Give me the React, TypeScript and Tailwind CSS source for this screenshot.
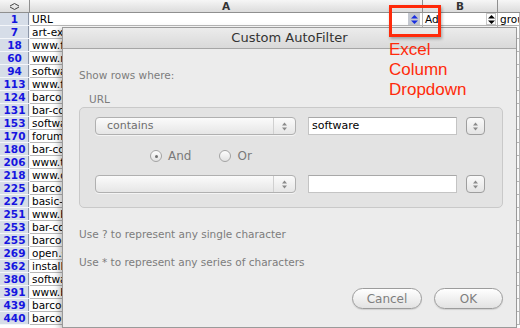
import React from "react";

const rows: [string, string][] = [
  ["7", "art-explosion.com"],
  ["18", "www.freedownloadscenter.com"],
  ["60", "www.raxsoft.com"],
  ["94", "software.informer.com"],
  ["113", "www.freewarefiles.com"],
  ["124", "barcode-software.net"],
  ["131", "bar-code-labels.com"],
  ["153", "software.net"],
  ["170", "forums.barcode.com"],
  ["180", "bar-code.info"],
  ["206", "www.tucows.com"],
  ["218", "www.download.com"],
  ["225", "barcodesinc.com"],
  ["227", "basic-ideas.com"],
  ["251", "www.barcodeman.com"],
  ["253", "bar-code-fonts.com"],
  ["255", "barcode-label.com"],
  ["269", "open.source.net"],
  ["362", "install.com"],
  ["380", "software.com"],
  ["391", "www.brothersoft.com"],
  ["439", "barcode-gen.com"],
  ["440", "barcodes.net"],
];

const cell = "h-[13px] border-r border-b border-[#b8b8b8] bg-white overflow-hidden whitespace-nowrap leading-[12px] pl-[2px] text-[10.5px] text-black";
const rowHead = "h-[13px] border-r border-b border-[#f4f6fa] bg-[#d6dde8] text-center font-bold text-[10.5px] leading-[12px] text-[#1515e0] shadow-[inset_-1px_0_0_#8c96a8]";

const Updown = ({ color = "#000" }: { color?: string }) => (
  <svg width="7" height="9" viewBox="0 0 7 9">
    <polygon points="3.5,0 7,3.5 0,3.5" fill={color} />
    <polygon points="3.5,9 7,5.5 0,5.5" fill={color} />
  </svg>
);

const TinyArrows = () => (
  <svg width="5" height="9" viewBox="0 0 5 9">
    <polygon points="2.5,0.5 5,3.5 0,3.5" fill="#8a8a8a" />
    <polygon points="2.5,8.5 5,5.5 0,5.5" fill="#8a8a8a" />
  </svg>
);

const Popup = ({ label }: { label?: string }) => (
  <div className="flex h-[18px] w-[201px] items-center rounded-[4px] border border-[#b0b0b0] bg-gradient-to-b from-[#fbfbfb] to-[#e6e6e6] shadow-[0_1px_0_#f4f4f4]">
    <span className="flex-1 pl-[11px] text-[11px] text-[#6e6e6e]">{label}</span>
    <div className="flex h-full w-[22px] items-center justify-center border-l border-[#d0d0d0]">
      <TinyArrows />
    </div>
  </div>
);

const Stepper = () => (
  <div className="flex h-[18px] w-[19px] items-center justify-center rounded-[4px] border border-[#9e9e9e] bg-gradient-to-b from-[#fafafa] to-[#e4e4e4]">
    <TinyArrows />
  </div>
);

const Field = ({ value }: { value?: string }) => (
  <div className="h-[18px] w-[149px] border border-[#c4c4c4] border-t-[#a8a8a8] bg-white pl-[3px] text-[11px] leading-[16px] text-black">
    {value}
  </div>
);

const Radio = ({ on, label }: { on?: boolean; label: string }) => (
  <div className="flex items-center gap-[6px]">
    <div className="flex h-[12px] w-[12px] items-center justify-center rounded-full border border-[#a4a4a4] bg-gradient-to-b from-[#fdfdfd] to-[#e2e2e2]">
      {on && <div className="h-[3px] w-[3px] rounded-full bg-[#707070]" />}
    </div>
    <span className="text-[12px] text-[#7a7a7a]">{label}</span>
  </div>
);

const Button = ({ label, w }: { label: string; w: string }) => (
  <div className={`flex h-[21px] ${w} items-center justify-center rounded-full border border-[#9c9c9c] bg-gradient-to-b from-[#ffffff] to-[#e2e2e2] text-[12px] text-[#7e7e7e] shadow-[0_1px_1px_rgba(0,0,0,0.12)]`}>
    {label}
  </div>
);

export default function App() {
  return (
    <div className="relative h-[328px] w-[520px] overflow-hidden bg-white" style={{ fontFamily: '"DejaVu Sans", "Noto Sans", sans-serif' }}>
      {/* sheet */}
      <div className="grid grid-cols-[30px_393px_75px_1fr]">
        <div className="flex h-[13px] items-center justify-center border-r border-b border-[#8f8f8f] bg-gradient-to-b from-[#f6f6f6] to-[#dcdcdc]">
          <svg width="11" height="7" viewBox="0 0 11 7">
            <polyline points="1,3 5.5,0.5 10,3" fill="none" stroke="#444" strokeWidth="1" />
            <polyline points="1,4 5.5,6.5 10,4" fill="none" stroke="#444" strokeWidth="1" />
          </svg>
        </div>
        <div className="h-[13px] border-r border-b border-[#8f8f8f] bg-gradient-to-b from-[#f6f6f6] to-[#dcdcdc] text-center text-[10.5px] font-bold leading-[12px] text-[#333]">A</div>
        <div className="h-[13px] border-r border-b border-[#8f8f8f] bg-gradient-to-b from-[#f6f6f6] to-[#dcdcdc] text-center text-[10.5px] font-bold leading-[12px] text-[#333]">B</div>
        <div className="h-[13px] border-b border-[#8f8f8f] bg-gradient-to-b from-[#f6f6f6] to-[#dcdcdc]" />

        <div className={rowHead}>1</div>
        <div className={`${cell} flex items-center justify-between pr-[2px]`}>
          <span>URL</span>
          <div className="flex h-[12px] w-[12px] items-center justify-center bg-[#c4c8d0]">
            <Updown color="#1a2ee0" />
          </div>
        </div>
        <div className={`${cell} flex items-center justify-between pr-[1px]`}>
          <span>Ad</span>
          <div className="flex h-[12px] w-[10px] items-center justify-center border border-[#c8c8c8] bg-white">
            <Updown />
          </div>
        </div>
        <div className={cell}>grou</div>

        {rows.map(([n, t]) => (
          <React.Fragment key={n}>
            <div className={rowHead}>{n}</div>
            <div className={cell}>{t}</div>
            <div className={cell} />
            <div className={cell} />
          </React.Fragment>
        ))}
      </div>

      {/* dialog sheet */}
      <div className="absolute left-[62px] top-[27px] flex h-[301px] w-[455px] flex-col border border-[#9a9a9a] bg-[#ececec] shadow-[-3px_2px_6px_rgba(0,0,0,0.25)]">
        <div className="flex h-[21px] items-center justify-center border-b border-[#a6a6a6] bg-gradient-to-b from-[#ececec] to-[#d9d9d9] text-[13px] text-[#333]">
          Custom AutoFilter
        </div>
        <div className="flex flex-1 flex-col px-[16px] text-[#7c7c7c]">
          <div className="mt-[19px] text-[10.5px] leading-[14px]">Show rows where:</div>
          <div className="ml-[10px] mt-[10px] text-[10.5px] leading-[14px]">URL</div>
          <div className="mr-[-3px] mt-[1px] flex flex-col rounded-[5px] border border-[#c9c9c9] bg-[#e3e3e3] pb-[14px] pl-[15px] pt-[9px]">
            <div className="flex items-center">
              <Popup label="contains" />
              <div className="ml-[12px]"><Field value="software" /></div>
              <div className="ml-[9px]"><Stepper /></div>
            </div>
            <div className="ml-[55px] mt-[14px] flex h-[14px] items-center gap-[28px]">
              <Radio on label="And" />
              <Radio label="Or" />
            </div>
            <div className="mt-[12px] flex items-center">
              <Popup />
              <div className="ml-[12px]"><Field /></div>
              <div className="ml-[9px]"><Stepper /></div>
            </div>
          </div>
          <div className="mt-[19px] text-[10.5px] leading-[14px]">Use ? to represent any single character</div>
          <div className="mt-[14px] text-[10.5px] leading-[14px]">Use * to represent any series of characters</div>
          <div className="mr-[-3px] mt-[19px] flex justify-end gap-[12px]">
            <Button label="Cancel" w="w-[70px]" />
            <Button label="OK" w="w-[69px]" />
          </div>
        </div>
      </div>

      {/* annotation */}
      <div className="absolute left-[389px] top-[5px] h-[32px] w-[52px] border-[3px] border-[#ff2a0a] shadow-[1px_2px_3px_rgba(0,0,0,0.3)]" />
      <div className="absolute left-[389px] top-[40px] text-[17px] leading-[20px] text-[#ff2a0a]" style={{ fontFamily: '"Liberation Sans", Arial, sans-serif' }}>
        <div>Excel</div>
        <div>Column</div>
        <div>Dropdown</div>
      </div>
    </div>
  );
}
